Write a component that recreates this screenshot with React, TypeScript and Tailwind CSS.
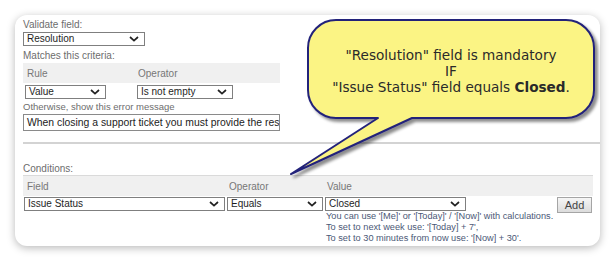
import React from "react";

function Chevron() {
  return (
    <svg width="10" height="6" viewBox="0 0 10 6" className="shrink-0">
      <path d="M1 1l4 3.6L9 1" fill="none" stroke="#222" strokeWidth="1.7" />
    </svg>
  );
}

function Select({ value, className }: { value: string; className: string }) {
  return (
    <div
      className={`flex h-[14px] items-center justify-between border border-[#7f7f7f] bg-white pl-[3px] pr-[5px] text-[10px] leading-none text-[#1e1e1e] ${className}`}
    >
      <span>{value}</span>
      <Chevron />
    </div>
  );
}

export default function App() {
  return (
    <div className="relative h-[265px] w-[616px] overflow-hidden bg-white pl-[15px] pt-[15px] font-['Liberation_Sans',Arial,sans-serif]">
      {/* card */}
      <div className="flex h-[231px] w-[585px] flex-col overflow-hidden rounded-[12px] bg-white pl-[8px] pt-[3px] shadow-[0_2px_9px_rgba(0,0,0,0.28)]">
        <div className="h-[13px] text-[10px] leading-[13px] text-[#6d6d6d]">Validate field:</div>
        <Select value="Resolution" className="mt-[1px] w-[122px]" />
        <div className="mt-[3px] h-[14px] text-[10px] leading-[14px] text-[#6d6d6d]">Matches this criteria:</div>
        <div className="flex h-[20px] w-[257px] items-center bg-[#f0f0f0] text-[10px] text-[#777]">
          <div className="w-[114px] pl-[4px]">Rule</div>
          <div className="pl-[1px]">Operator</div>
        </div>
        <div className="mt-[2px] flex">
          <Select value="Value" className="ml-[2px] w-[81px]" />
          <Select value="Is not empty" className="ml-[31px] w-[96px]" />
        </div>
        <div className="h-[14px] text-[9.5px] leading-[15px] text-[#6d6d6d]">Otherwise, show this error message</div>
        <div className="mt-[1px] flex h-[17px] w-[257px] items-center overflow-hidden whitespace-nowrap border border-[#8a8a8a] pl-[3px] text-[10.4px] text-[#222]">
          When closing a support ticket you must provide the res
        </div>
        <div className="mt-[11px] h-[2px] w-full bg-[#d3d3d3]" />

        <div className="mt-[19px] h-[12px] text-[10px] leading-[12px] text-[#6d6d6d]">Conditions:</div>
        <div className="flex h-[21px] w-[570px] items-center border-t border-[#dadada] bg-[#f0f0f0] text-[10px] text-[#777]">
          <div className="w-[204px] pl-[4px]">Field</div>
          <div className="w-[98px] pl-[2px]">Operator</div>
          <div className="pl-[2px]">Value</div>
        </div>
        <div className="mt-[1px] flex items-start">
          <Select value="Issue Status" className="ml-[1px] w-[201px]" />
          <Select value="Equals" className="ml-[2px] w-[96px]" />
          <div className="ml-[2px] flex w-[232px] flex-col">
            <Select value="Closed" className="w-[141px]" />
            <div className="whitespace-nowrap pl-[1px] text-[9.2px] leading-[11px] text-[#4b5876]">
              <div>You can use '[Me]' or '[Today]' / '[Now]' with calculations.</div>
              <div>To set to next week use: '[Today] + 7',</div>
              <div>To set to 30 minutes from now use: '[Now] + 30'.</div>
            </div>
          </div>
          <button className="flex h-[16px] w-[35px] items-center justify-center border border-[#a5a5a5] bg-gradient-to-b from-[#f6f6f6] to-[#dcdcdc] text-[11px] text-[#444]">
            Add
          </button>
        </div>
      </div>

      {/* callout */}
      <svg
        className="absolute left-[280px] top-[15px]"
        width="336"
        height="170"
        viewBox="0 0 336 170"
      >
        <defs>
          <filter id="sh" x="-10%" y="-10%" width="130%" height="130%">
            <feDropShadow dx="3" dy="3" stdDeviation="1.8" floodColor="#000" floodOpacity="0.45" />
          </filter>
        </defs>
        <path
          d="M56 5H286A28 28 0 0 1 314 33V75A28 28 0 0 1 286 103H132L11 159L98 103H56A28 28 0 0 1 28 75V33A28 28 0 0 1 56 5Z"
          fill="#fbf484"
          stroke="#24237a"
          strokeWidth="2"
          strokeLinejoin="round"
          filter="url(#sh)"
        />
      </svg>
      <div className="absolute left-[308px] top-[20px] flex h-[98px] w-[286px] flex-col items-center justify-center pt-[4px] font-['DejaVu_Sans',sans-serif] text-[13.6px] leading-[16px] text-[#2a2a2a]">
        <div>"Resolution" field is mandatory</div>
        <div>IF</div>
        <div>
          "Issue Status" field equals <b>Closed</b>.
        </div>
      </div>
    </div>
  );
}
